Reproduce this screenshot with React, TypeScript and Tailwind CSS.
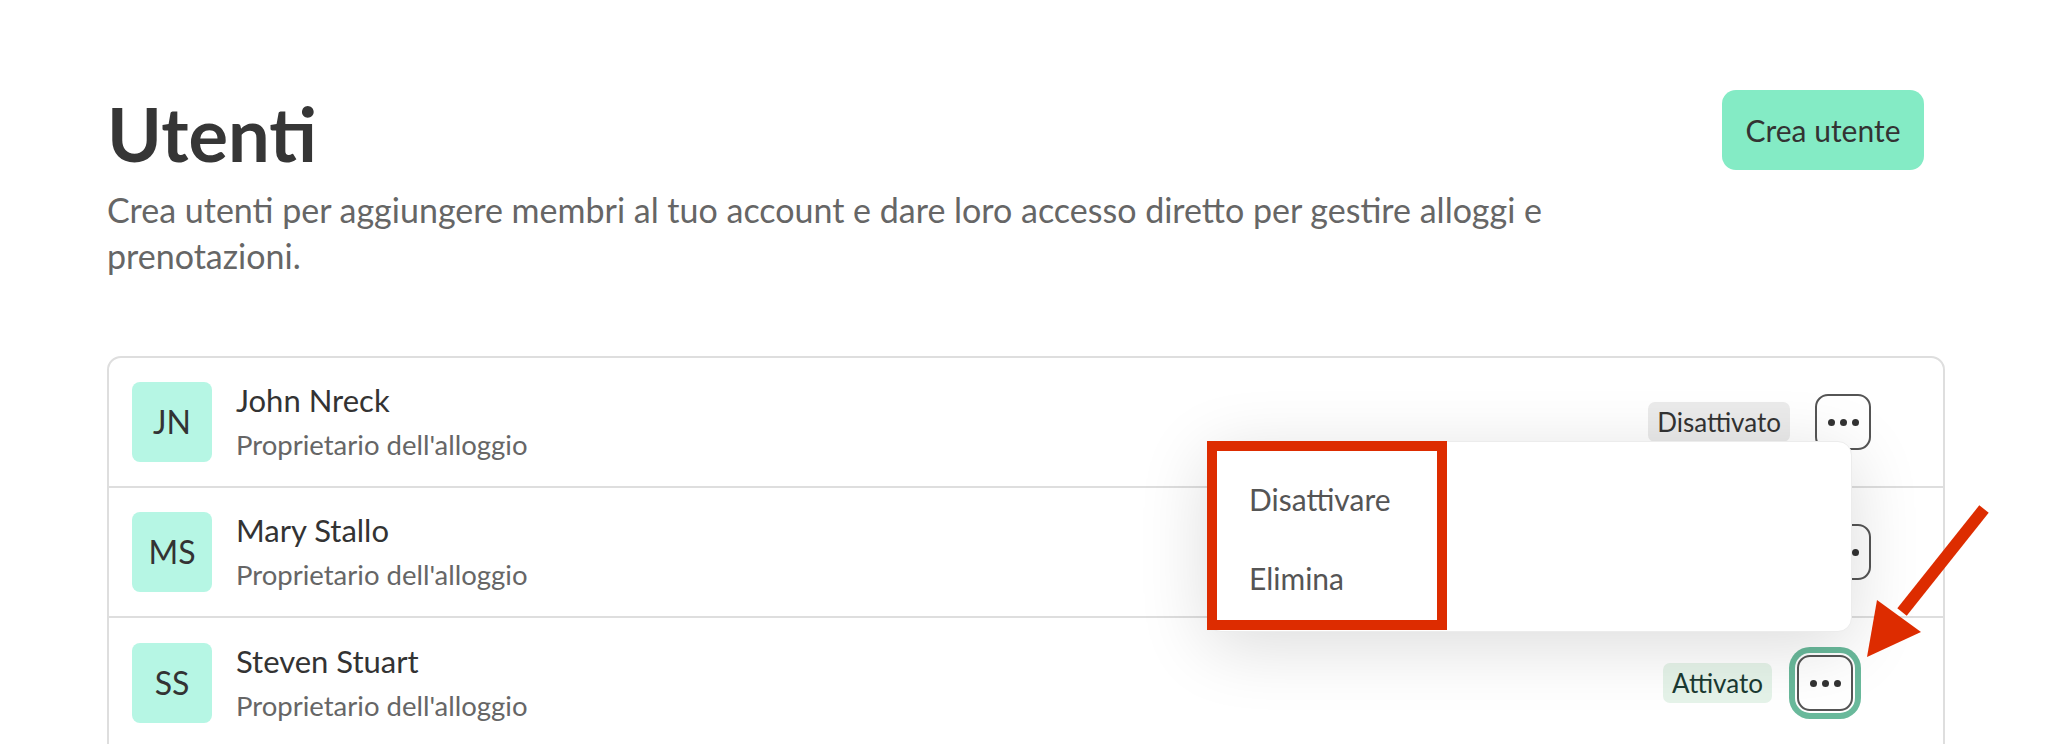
import React from "react";

type User = {
  initials: string;
  name: string;
  role: string;
  active: boolean;
  focused?: boolean;
};

const users: User[] = [
  { initials: "JN", name: "John Nreck", role: "Proprietario dell'alloggio", active: false },
  { initials: "MS", name: "Mary Stallo", role: "Proprietario dell'alloggio", active: true },
  { initials: "SS", name: "Steven Stuart", role: "Proprietario dell'alloggio", active: true, focused: true },
];

const Dots = () => (
  <span className="flex items-center gap-[5px]">
    <span className="w-[7px] h-[7px] rounded-full bg-[#333]" />
    <span className="w-[7px] h-[7px] rounded-full bg-[#333]" />
    <span className="w-[7px] h-[7px] rounded-full bg-[#333]" />
  </span>
);

const UserRow = ({ user, last }: { user: User; last: boolean }) => {
  return (
    <div
      className={
        "flex items-center h-[130px] px-[23px] " +
        (last ? "" : "border-b-2 border-[#dedede]")
      }
    >
      <div className="w-[80px] h-[80px] rounded-[8px] bg-[#b6f6e4] flex items-center justify-center text-[32px] text-[#333]">
        {user.initials}
      </div>
      <div className="ml-[24px]">
        <p className="text-[31px] leading-[40px] text-[#333]">{user.name}</p>
        <p className="text-[27.5px] leading-[38px] text-[#666] mt-[6px]">{user.role}</p>
      </div>

      <div
        className={
          "ml-auto flex items-center gap-[25px] " +
          (user.focused ? "mr-[67px]" : "mr-[49px]")
        }
      >
        {user.active ? (
          <span className="h-[40px] px-[9px] rounded-[7px] bg-[#e5f3e9] text-[26px] text-[#1a3a32] flex items-center">
            Attivato
          </span>
        ) : (
          <span className="h-[40px] px-[9px] rounded-[7px] bg-[#ebebeb] text-[26px] text-[#333] flex items-center">
            Disattivato
          </span>
        )}
        <button
          className={
            "w-[56px] h-[56px] rounded-[13px] border-2 border-[#555] bg-white flex items-center justify-center " +
            (user.focused ? "ring-[6px] ring-[#69b99b] ring-offset-2" : "")
          }
        >
          <Dots />
        </button>
      </div>
    </div>
  );
};

export default function App() {
  return (
    <div className="relative w-full h-[744px] overflow-hidden bg-white font-['Lato',sans-serif] text-[#333]">
      <div className="ml-[107px] w-[1838px] pt-[90px]">
        {/* header */}
        <div className="flex items-start justify-between">
          <div>
            <h1 className="mt-[7px] text-[74px] leading-[74px] font-bold text-[#363636]">
              Utenti
            </h1>
            <p className="mt-[16px] max-w-[1500px] text-[34px] leading-[46px] text-[#666]">
              Crea utenti per aggiungere membri al tuo account e dare loro accesso diretto per gestire
              alloggi e prenotazioni.
            </p>
          </div>
          <button className="mr-[21px] w-[202px] h-[80px] rounded-[14px] bg-[#84ebc5] text-[30px] text-[#333] shrink-0">
            Crea utente
          </button>
        </div>

        {/* users list */}
        <div className="mt-[77px] pb-[40px] border-2 border-[#dedede] rounded-[14px]">
          {users.map((u, i) => (
            <UserRow key={u.name} user={u} last={i === users.length - 1} />
          ))}
        </div>
      </div>

      {/* dropdown menu */}
      <div className="absolute left-[1207px] top-[441px] w-[645px] h-[191px] rounded-[14px] bg-white border border-[#ececec] shadow-[0_14px_70px_rgba(0,0,0,0.14)] py-[18px]">
        <div className="h-[79px] flex items-center pl-[41px] text-[30px] text-[#555]">Disattivare</div>
        <div className="h-[79px] flex items-center pl-[41px] text-[30px] text-[#555]">Elimina</div>
      </div>

      {/* annotation */}
      <div className="absolute left-[1207px] top-[441px] w-[240px] h-[189px] border-[10px] border-[#dd2c00]" />
      <svg
        className="absolute left-0 top-0 pointer-events-none"
        width="2066"
        height="744"
        viewBox="0 0 2066 744"
      >
        <line x1="1984" y1="509" x2="1902" y2="612" stroke="#dd2c00" strokeWidth="12" />
        <polygon points="1867,657 1877,600 1921,632" fill="#dd2c00" />
      </svg>
    </div>
  );
}
